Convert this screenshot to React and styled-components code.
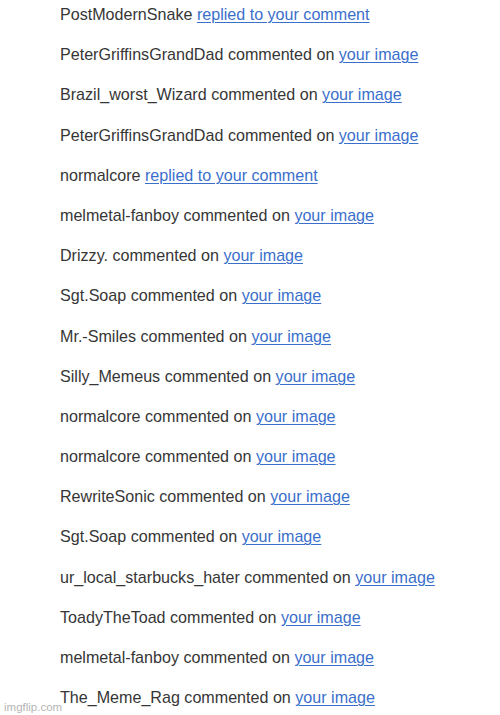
import React from 'react';
import styled, { createGlobalStyle } from 'styled-components';

const GlobalStyle = createGlobalStyle`
    html, body {
        margin: 0;
        padding: 0;
        background: #ffffff;
    }
`;

const Page = styled.div`
    position: relative;
    width: 500px;
    height: 715px;
    overflow: hidden;
    background: #ffffff;
    font-family: 'Liberation Sans', Arial, sans-serif;
`;

const List = styled.ul`
    list-style: none;
    margin: 0;
    padding: 4px 0 0 60px;
    display: flex;
    flex-direction: column;
    gap: 20.2px;
`;

const Row = styled.li`
    height: 20px;
    line-height: 20px;
    font-size: 16.1px;
    color: #363636;
    white-space: nowrap;
`;

const Link = styled.a`
    color: #3a6fcb;
    text-decoration: underline;
    text-decoration-thickness: 1px;
    text-underline-offset: 2px;
`;

const Watermark = styled.div`
    position: absolute;
    left: 4px;
    bottom: 2px;
    font-size: 11.5px;
    color: #b5b5b5;
    font-family: 'Liberation Sans', Arial, sans-serif;
`;

const notifications = [
    { user: 'PostModernSnake', reply: true },
    { user: 'PeterGriffinsGrandDad' },
    { user: 'Brazil_worst_Wizard' },
    { user: 'PeterGriffinsGrandDad' },
    { user: 'normalcore', reply: true },
    { user: 'melmetal-fanboy' },
    { user: 'Drizzy.' },
    { user: 'Sgt.Soap' },
    { user: 'Mr.-Smiles' },
    { user: 'Silly_Memeus' },
    { user: 'normalcore' },
    { user: 'normalcore' },
    { user: 'RewriteSonic' },
    { user: 'Sgt.Soap' },
    { user: 'ur_local_starbucks_hater' },
    { user: 'ToadyTheToad' },
    { user: 'melmetal-fanboy' },
    { user: 'The_Meme_Rag' },
];

export default function App() {
    return (
        <Page>
            <GlobalStyle />
            <List>
                {notifications.map((n, i) => (
                    <Row key={i}>
                        {n.reply ? (
                            <>{n.user} <Link>replied to your comment</Link></>
                        ) : (
                            <>{n.user} commented on <Link>your image</Link></>
                        )}
                    </Row>
                ))}
            </List>
            <Watermark>imgflip.com</Watermark>
        </Page>
    );
}
